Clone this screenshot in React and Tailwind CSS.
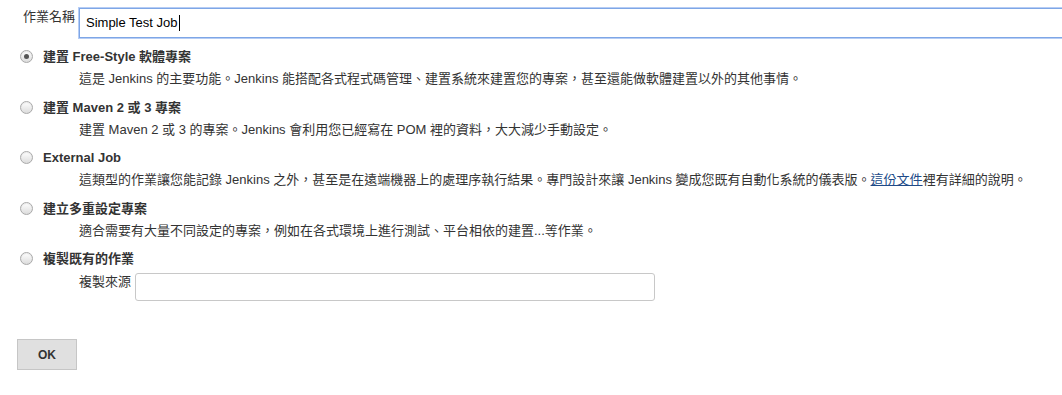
const FONT = { fontFamily: '"Liberation Sans", "Noto Sans CJK TC", Arial, sans-serif' }

function Radio({ checked }) {
  return (
    <span className="relative mt-[4px] flex h-[13px] w-[13px] shrink-0 items-center justify-center rounded-full border border-[#a9a9a9] bg-gradient-to-b from-[#ffffff] to-[#dcdcdc] shadow-[inset_0_1px_1px_rgba(0,0,0,0.08)]">
      {checked && <span className="h-[5px] w-[5px] rounded-full bg-[#555]" />}
    </span>
  )
}

function JobType({ checked, title, children }) {
  return (
    <div className="mb-[6.5px]">
      <div className="flex items-start gap-[10px] pl-[20px]">
        <Radio checked={checked} />
        <div className="text-[13px] font-bold leading-[22px] text-[#333]">{title}</div>
      </div>
      {children}
    </div>
  )
}

function Desc({ children }) {
  return <div className="pl-[79px] text-[13px] leading-[22px] text-[#333] whitespace-nowrap">{children}</div>
}

export default function App() {
  return (
    <div className="h-[395px] w-[1062px] overflow-hidden bg-white pt-[8px] text-[#333]" style={FONT}>
      {/* Job name */}
      <div className="flex items-start">
        <label className="w-[79px] shrink-0 pl-[23px] pt-[1px] text-[13px] leading-[16px] whitespace-nowrap">作業名稱</label>
        <div className="flex h-[30px] w-[1000px] shrink-0 items-center border border-[#7ea6e6] pl-[6px] shadow-[0_0_0_1px_#b6cdf5] text-[13px] text-[#000]">
          Simple Test Job
          <span className="ml-[1px] inline-block h-[16px] w-[1px] bg-black" />
        </div>
      </div>

      <div className="mt-[8px]">
        <JobType checked title="建置 Free-Style 軟體專案">
          <Desc>這是 Jenkins 的主要功能。Jenkins 能搭配各式程式碼管理、建置系統來建置您的專案，甚至還能做軟體建置以外的其他事情。</Desc>
        </JobType>
        <JobType title="建置 Maven 2 或 3 專案">
          <Desc>建置 Maven 2 或 3 的專案。Jenkins 會利用您已經寫在 POM 裡的資料，大大減少手動設定。</Desc>
        </JobType>
        <JobType title="External Job">
          <Desc>
            這類型的作業讓您能記錄 Jenkins 之外，甚至是在遠端機器上的處理序執行結果。專門設計來讓 Jenkins 變成您既有自動化系統的儀表版。
            <a href="#" className="text-[#204a87] underline">這份文件</a>
            裡有詳細的說明。
          </Desc>
        </JobType>
        <JobType title="建立多重設定專案">
          <Desc>適合需要有大量不同設定的專案，例如在各式環境上進行測試、平台相依的建置...等作業。</Desc>
        </JobType>
        <div>
          <div className="flex items-start gap-[10px] pl-[20px]">
            <Radio />
            <div className="text-[13px] font-bold leading-[22px] text-[#333]">複製既有的作業</div>
          </div>
          <div className="mt-[3px] flex items-start pl-[79px]">
            <label className="w-[56px] shrink-0 pt-[1px] text-[13px] leading-[16px]">複製來源</label>
            <div className="h-[28px] w-[520px] rounded-[3px] border border-[#c8c8c8] bg-white" />
          </div>
        </div>
      </div>

      <div className="mt-[38px] pl-[17px]">
        <button className="flex h-[31px] w-[60px] items-center justify-center border border-[#c6c6c6] bg-[#e0e0e0] text-[12px] font-bold text-[#333]">
          OK
        </button>
      </div>
    </div>
  )
}
